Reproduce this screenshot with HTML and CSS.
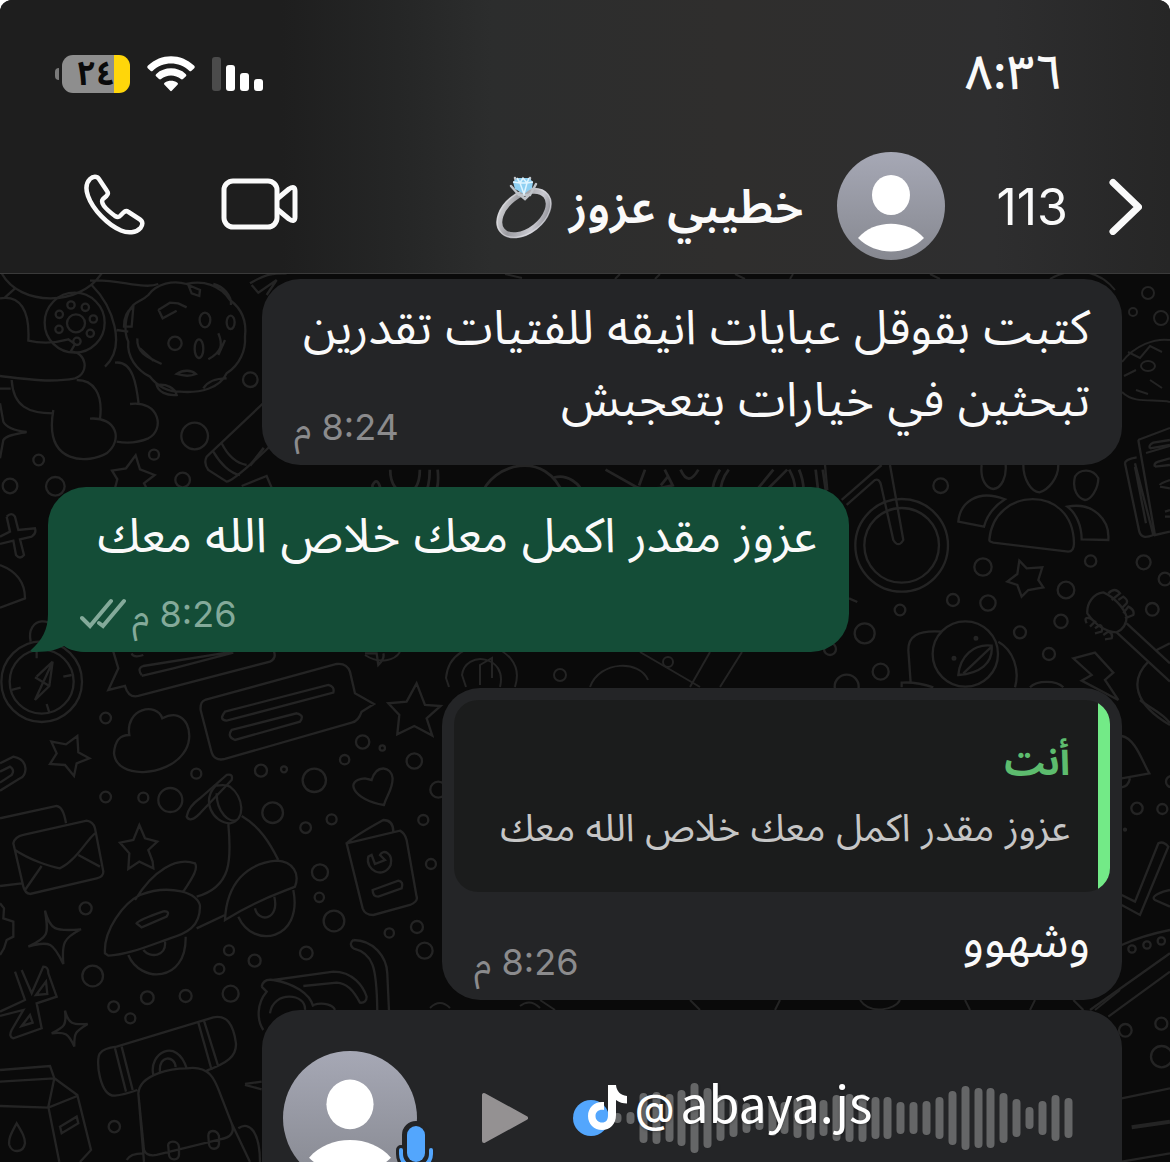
FILE: index.html
```html
<!DOCTYPE html>
<html lang="ar" dir="rtl">
<head>
<meta charset="utf-8">
<meta name="viewport" content="width=device-width, initial-scale=1">
<title>خطيبي عزوز</title>
<link rel="stylesheet" href="styles.css">
</head>
<body>
<div class="screen">
  <header class="header">
    <div class="status">
      <time class="clock">٨:٣٦</time>
      <div class="indicators">
        <svg class="signal" width="52" height="36" viewBox="0 0 52 36" aria-hidden="true">
          <rect x="0" y="1" width="9" height="34" rx="3" fill="#4b4b4b"/>
          <rect x="14" y="9" width="9" height="26" rx="3" fill="#fff"/>
          <rect x="28" y="17" width="9" height="18" rx="3" fill="#fff"/>
          <rect x="42" y="23" width="9" height="12" rx="3" fill="#fff"/>
        </svg>
        <svg width="48" height="36" viewBox="0 0 48 36" fill="#fff" aria-hidden="true">
          <path d="M1 12.5C0 11.500 0 10.500 1 9.500C14-3 34-3 47 9.500C48 10.500 48 11.500 47 12.500L44.500 14.800C43.800 15.500 43 15.500 42.200 14.800C32 5.200 16 5.200 5.800 14.800C5 15.500 4.200 15.500 3.500 14.800Z"/>
          <path d="M9.300 20.600C8.400 19.700 8.400 18.800 9.300 17.900C17.500 10.500 30.500 10.500 38.700 17.900C39.600 18.800 39.600 19.700 38.700 20.600L36 23C35.300 23.600 34.600 23.600 33.900 23C28.200 18.200 19.800 18.200 14.100 23C13.400 23.600 12.700 23.600 12 23Z"/>
          <path d="M17.500 28.800C16.800 28.100 16.900 27.300 17.600 26.800C21.500 24.200 26.500 24.200 30.400 26.800C31.100 27.300 31.200 28.100 30.500 28.800L25 34.600C24.300 35.300 23.700 35.300 23 34.600Z"/>
        </svg>
        <div class="battery"><span class="level">٢٤</span></div>
      </div>
    </div>
    <nav class="nav">
      <button class="icon-btn back" aria-label="رجوع">
        <svg width="34" height="58" viewBox="0 0 34 58" fill="none" stroke="#fafafa" stroke-width="7" stroke-linecap="round" stroke-linejoin="round"><path d="M5 5.500L30.500 30L5 54.500"/></svg>
      </button>
      <span class="unread">113</span>
      <svg class="avatar" viewBox="0 0 108 108" aria-hidden="true">
        <defs><linearGradient id="face" x1="0" y1="0" x2="0" y2="1"><stop offset="0" stop-color="#a6a8b5"/><stop offset="1" stop-color="#868890"/></linearGradient></defs>
        <circle cx="54" cy="54" r="54" fill="url(#face)"/>
        <ellipse cx="54" cy="43" rx="19" ry="20" fill="#fff"/>
        <path d="M21 86C37 67 71 67 87 86C69 104 39 104 21 86Z" fill="#fff"/>
      </svg>
      <h1 class="name">خطيبي عزوز
        <svg class="ring" width="58" height="62" viewBox="0 0 58 62" role="img" aria-label="خاتم">
          <defs><linearGradient id="metal" x1="0" y1="0" x2="1" y2="1"><stop offset="0" stop-color="#e2e2e4"/><stop offset=".35" stop-color="#9b9ba0"/><stop offset=".7" stop-color="#c9c9d0"/><stop offset="1" stop-color="#77777e"/></linearGradient></defs>
          <ellipse cx="29" cy="38" rx="28" ry="18" transform="rotate(-38 29 38)" fill="none" stroke="url(#metal)" stroke-width="6"/>
          <ellipse cx="29" cy="38" rx="30" ry="20" transform="rotate(-38 29 38)" fill="none" stroke="#e5e5ea" stroke-width="1" opacity=".6"/>
          <path d="M16 11L24 20L35 20L41 9M20 3L24 14M35 3L33 14M24 19L30 24L35 19" fill="none" stroke="#bfc3c8" stroke-width="2.500" stroke-linecap="round"/>
          <path d="M18 7L22 3H34L38 7L37 13L29 19L20 14Z" fill="#8fd0f2"/>
          <path d="M22 3L25 8L28 3L32 8L34 3M18 7L25 8L32 8L38 7M25 8L29 19L32 8" fill="none" stroke="#dff4ff" stroke-width="1.500"/>
        </svg>
      </h1>
      <div class="calls">
        <button class="icon-btn" aria-label="مكالمة فيديو">
          <svg width="78" height="52" viewBox="0 0 78 52" fill="none" stroke="#fafafa" stroke-width="5" stroke-linejoin="round"><rect x="3" y="3" width="53" height="46" rx="9"/><path d="M56 21L68 11Q74 7 74 13V39Q74 45 68 41L56 31"/></svg>
        </button>
        <button class="icon-btn" aria-label="مكالمة صوتية">
          <svg width="61" height="61" viewBox="0 0 61 61" fill="none" stroke="#fafafa" stroke-width="4.500" stroke-linejoin="round"><path d="M6 5C9 2 13 2 15 5L23 17C24.500 19 24 20.500 22.500 22L19 25C17 27 18 29 20 32C23 36 27 39 31 42C33.500 43.500 35 43.500 36.500 41.500L39.500 38.500C41 37 42.500 36.500 44.500 38L56 45.500C59 47.500 59 51 56.500 54C52 59 44 59.500 37 56.500C24 51 9 36 4 22C1.500 15 2 9 6 5Z"/></svg>
        </button>
      </div>
    </nav>
  </header>

  <main class="chat">
    <svg class="wallpaper" width="1170" height="888" viewBox="0 274 1170 888" aria-hidden="true">
      <g transform="translate(0 270) scale(.3333)">
        <path d="M5 10C60 110 240 110 305 10M0 85C60 75 90 120 85 212C130 222 170 218 205 208L225 222L212 245C260 245 270 310 225 325C150 340 60 325 0 318M45 55L12 85M35 330C40 410 85 430 160 430M0 356H32M160 420C130 590 270 580 320 550C370 510 350 440 270 446M300 446C310 370 280 330 230 330M275 45C340 110 380 230 315 290M345 278C400 270 410 350 416 402M390 402C480 390 495 480 445 505C410 520 380 520 350 515M270 32C350 25 430 60 475 42M350 180L385 185M0 400L10 455C20 475 50 482 80 486C50 492 20 495 10 510L0 565"/>
        <circle cx="224" cy="158" r="90"/><circle cx="228" cy="160" r="27"/><circle cx="213" cy="105" r="11"/><circle cx="256" cy="112" r="11"/><circle cx="178" cy="133" r="11"/><circle cx="280" cy="147" r="11"/><circle cx="177" cy="178" r="11"/><circle cx="271" cy="190" r="11"/><circle cx="231" cy="214" r="11"/>
        <path d="M400 105C410 95 430 90 445 75C470 40 520 30 560 42C610 30 660 45 690 90C730 120 740 160 735 200C738 240 720 285 680 310C660 355 600 370 540 365C500 365 470 345 450 320C410 300 380 260 385 215C370 185 375 130 400 105ZM565 45L600 60L598 78L575 70ZM640 42C670 50 695 75 693 105M475 120L510 98L535 100L560 112M475 118L488 145L530 122M412 205C410 245 435 260 485 282M420 235L460 272M655 190C670 225 665 245 625 268M675 210L655 255M470 345C500 340 525 355 530 375C500 378 475 365 470 345ZM610 355C625 330 650 325 680 325M530 312C550 298 575 300 588 312C570 320 550 318 530 312ZM372 170C372 140 385 120 400 112L395 170Z"/>
        <ellipse cx="615" cy="150" rx="16" ry="22"/><ellipse cx="525" cy="220" rx="20" ry="20"/><ellipse cx="597" cy="236" rx="13" ry="28"/><ellipse cx="692" cy="157" rx="12" ry="20"/>
        <circle cx="751" cy="329" r="22"/><circle cx="584" cy="498" r="40"/><circle cx="462" cy="554" r="15"/><circle cx="116" cy="570" r="16"/><circle cx="30" cy="648" r="22"/><circle cx="166" cy="649" r="28"/><circle cx="548" cy="630" r="22"/>
        <path d="M800 390L620 560Q610 580 625 600L680 635Q700 635 830 510M640 545C660 580 690 610 720 615M665 520C685 560 710 580 740 585M750 40C800 10 820 10 860 10M755 45L775 68L830 30L800 75M345 655L352 628L336 602L378 595L407 556L420 598L464 615L432 640L440 655M725 648L800 618L818 660M20 740Q35 725 45 740L55 780L105 775Q110 790 95 800L60 808L72 855Q60 870 48 855L40 812L0 822M0 800L30 785L20 740"/>
      </g>
      <g transform="translate(0 560) scale(.3333)">
        <path d="M0 15C40 30 75 60 75 115L0 143"/>
        <circle cx="125" cy="365" r="121"/><circle cx="125" cy="365" r="96"/><path d="M92 245C75 170 170 160 175 240M105 420L158 305L148 378ZM105 352L148 378M110 350L158 305M110 275V295M190 350L215 345M140 432L148 458M35 390L62 383"/>
        <circle cx="317" cy="474" r="16"/><circle cx="317" cy="711" r="16"/><circle cx="430" cy="713" r="15"/><circle cx="511" cy="720" r="36"/><circle cx="589" cy="641" r="15"/><circle cx="783" cy="632" r="18"/><circle cx="852" cy="628" r="9"/><circle cx="943" cy="661" r="35"/><circle cx="818" cy="758" r="31"/><circle cx="917" cy="803" r="16"/><circle cx="995" cy="778" r="15"/><circle cx="1034" cy="599" r="14"/><circle cx="1088" cy="546" r="20"/><circle cx="1147" cy="564" r="8"/><circle cx="1243" cy="603" r="23"/><circle cx="1315" cy="689" r="24"/><circle cx="1270" cy="780" r="15"/>
        <path d="M340 275L355 325L325 390L375 378Q385 415 415 408L810 305Q830 295 822 275M395 280Q400 295 430 285M425 345Q410 325 430 318L700 275M425 348L520 325L700 278M615 420L1010 312Q1040 308 1050 335L1065 400L1122 432L1085 455Q1075 485 1055 488L675 597Q640 605 633 570L602 450Q600 425 615 420ZM675 455L985 375Q1005 380 1000 398L680 482Q655 480 675 455ZM695 510L890 460Q915 465 900 485L705 540Q680 530 695 510ZM388 525C375 445 470 425 487 475C560 435 590 530 550 580C500 650 350 660 342 580C345 540 360 525 388 525Z"/>
        <path d="M1250 370L1275 435L1322 438L1280 475L1297 527L1243 498L1192 523L1198 465L1165 430L1220 425ZM232 528L235 577L268 595L230 610L222 648L195 615L150 612L170 580L154 545L198 553ZM1152 735C1060 720 1030 660 1095 655L1115 660C1130 610 1175 620 1178 655C1178 690 1160 705 1152 735ZM418 795L435 835L472 845L445 870L458 905L460 925L418 905L385 927L388 880L360 848L400 840ZM0 610L40 590C90 600 80 650 60 655L0 692M0 635L30 620Q45 630 35 645L0 668M560 770Q565 740 600 715L680 645Q700 640 695 660L600 760Q570 790 560 770ZM1095 280L1130 280L1135 315Q1155 295 1150 280"/>
        <path d="M650 675C600 720 640 790 690 790C740 780 730 710 690 680C670 670 650 680 650 675ZM650 700C650 760 690 790 710 780M685 792C695 900 695 980 590 1010M725 768C780 800 810 850 835 900M1040 850Q1060 830 1150 780Q1180 780 1180 815M1040 850L1200 812Q1215 820 1220 840L1250 1010Q1255 1025 1230 1035L1120 1065Q1095 1065 1088 1045ZM0 775L170 738Q190 740 198 790M40 850Q45 830 70 825L260 782Q280 785 285 805L310 935Q310 950 290 955L90 1002Q75 1000 70 980ZM45 870C90 900 150 920 180 925C230 900 260 840 285 820M235 885L300 920M75 990L125 918M0 978L65 970"/>
      </g>
      <g transform="translate(0 840) scale(.3333)">
        <path d="M405 180C460 90 530 50 585 70C595 85 580 110 550 155M315 340C310 270 370 190 420 165C510 130 600 160 600 200C600 260 560 280 510 295C440 320 380 345 325 347ZM410 250Q415 240 490 214Q512 212 500 230L425 262ZM385 345C420 430 560 430 557 290M430 330C450 355 500 350 495 305M590 265L675 225M675 240C680 130 740 70 830 62C880 65 900 100 885 140C840 160 790 170 675 240ZM715 230C760 330 910 300 880 150M765 205C775 250 840 240 823 170M135 212C150 270 165 275 243 268C190 295 185 310 190 372C160 310 150 300 85 320C150 290 145 280 135 212ZM195 512C205 550 215 555 263 552C225 575 222 580 223 620C205 580 195 575 155 580C195 560 200 555 195 512ZM45 395L75 480L0 515M65 390L95 460L130 380Q145 380 145 400L170 470L110 490L125 565L40 595Q25 590 35 570L70 510L0 528M108 465L138 425L142 462ZM65 558L90 525L98 548ZM0 190L12 205L10 235L40 245V290L20 300L12 325L0 345M300 640Q310 625 350 620L640 532C680 525 700 550 708 610C710 650 680 670 620 692M300 640C285 660 300 770 345 767Q370 765 412 750M345 625L378 755M365 620L398 750M595 548L635 690M612 542L655 680M460 705C445 640 530 590 560 685M480 695C475 645 525 645 527 682M415 760C420 700 520 685 560 685C630 675 645 720 660 760L695 850Q710 890 660 898L470 945Q440 950 432 930ZM415 760L432 966M695 850L750 966M505 920C500 900 535 900 537 920V945C535 965 508 960 507 945ZM625 888C625 868 650 868 657 888V912C655 932 628 930 627 912ZM715 865C750 840 780 880 780 966M380 960Q390 940 430 940M0 690L150 678L163 715L232 765L273 930L240 966M163 715L145 800L178 966M0 725L163 715M0 798L145 803L232 768M180 860L230 830L235 850L185 880ZM50 850C30 885 25 900 28 915C35 940 70 940 75 910C75 890 65 875 50 850ZM1060 300C1120 300 1160 350 1162 400L1167 510M1060 325C1120 340 1130 380 1132 510M1060 300Q1045 312 1060 325M785 440Q790 415 820 420L1000 395C1060 395 1090 440 1100 470Q1100 490 1080 488C1060 450 1040 430 1010 428L910 438M820 420C880 430 930 460 940 500M785 440L800 455C770 490 770 540 790 570M810 520C820 450 920 460 915 510M940 495C970 485 1000 495 1005 510M735 732L785 725M735 735L785 748"/>
        <circle cx="257" cy="205" r="18"/><circle cx="278" cy="408" r="31"/><circle cx="341" cy="500" r="16"/><circle cx="391" cy="535" r="15"/><circle cx="442" cy="473" r="19"/><circle cx="557" cy="468" r="18"/><circle cx="658" cy="387" r="15"/><circle cx="687" cy="331" r="15"/><circle cx="764" cy="362" r="18"/><circle cx="692" cy="461" r="24"/><circle cx="919" cy="339" r="19"/><circle cx="960" cy="97" r="24"/><circle cx="958" cy="172" r="14"/><circle cx="1002" cy="243" r="31"/><circle cx="1168" cy="279" r="14"/><circle cx="1251" cy="261" r="18"/><circle cx="1274" cy="332" r="24"/><circle cx="1293" cy="72" r="15"/><circle cx="343" cy="860" r="17"/>
        <path d="M1105 50C1095 90 1150 120 1172 75C1180 40 1150 25 1140 45L1155 60L1125 72L1115 45ZM1118 150L1195 122Q1212 125 1205 145L1135 170Q1118 170 1118 150Z"/>
      </g>
      <g transform="translate(820 440) scale(.3333)">
        <circle cx="245" cy="316" r="139"/><circle cx="245" cy="316" r="112"/><path d="M15 75L22 150M65 180L185 75M80 195L165 120Q178 115 183 135L220 300Q235 325 250 300L210 75"/>
        <circle cx="362" cy="137" r="22"/><circle cx="489" cy="381" r="26"/><circle cx="399" cy="480" r="18"/><circle cx="504" cy="489" r="23"/><circle cx="240" cy="510" r="16"/><circle cx="134" cy="580" r="30"/><circle cx="182" cy="695" r="24"/><circle cx="738" cy="450" r="25"/><circle cx="723" cy="544" r="20"/><circle cx="600" cy="577" r="18"/><circle cx="687" cy="642" r="18"/><circle cx="812" cy="363" r="17"/><circle cx="971" cy="367" r="21"/><circle cx="1035" cy="417" r="19"/><circle cx="997" cy="508" r="19"/><circle cx="30" cy="627" r="18"/><circle cx="80" cy="740" r="36"/><circle cx="436" cy="642" r="98"/><circle cx="468" cy="595" r="4"/><circle cx="402" cy="655" r="4"/>
        <path d="M485 75C480 120 500 145 520 147C545 145 560 110 557 75M610 75C610 120 635 155 658 157C685 150 715 115 715 75M765 110C780 85 820 85 835 115C835 150 810 180 795 180C775 175 755 150 765 110ZM415 245C420 190 470 145 555 178C520 200 500 230 492 260Q440 250 415 245ZM508 300C520 140 760 130 762 310Q762 335 745 335L520 308Q508 305 508 300ZM742 200C820 185 870 240 865 300L785 298C785 260 770 220 742 200ZM598 362L620 385L667 382L655 420L670 442L625 450L605 470L592 435L562 425L592 402ZM760 655L825 638L880 698L855 720L895 780L785 722L815 705ZM915 70Q915 58 950 52M915 70L958 275Q965 300 1000 285L945 70M945 80L978 250M955 0L1005 285L1050 275M990 25Q985 15 1000 8L1050 0M990 25L1050 15M1005 80Q1000 70 1015 65L1050 55M1005 80L1050 75M1020 135Q1020 130 1050 120M1020 140L1050 145M1035 215L1050 210M1035 230H1050"/>
        <path d="M850 457C820 460 800 490 802 520C830 560 860 575 890 577C915 565 920 545 920 530C910 500 880 470 850 457ZM865 460Q885 440 900 460L875 480M895 480L910 470Q925 480 920 490L905 505M910 520L925 500Q945 510 940 525L915 535M800 550Q790 530 810 535L825 545L810 560M825 565L840 555Q850 560 845 575L825 580M850 585L865 575Q880 580 875 595L855 598M890 577L1050 725M920 550L1050 670M1010 630L1050 610M985 665C930 720 940 790 1050 855M535 605C580 630 600 690 585 742M365 575C290 570 265 590 265 630L272 728M245 742V728Q290 725 340 742M415 705C420 650 460 610 515 617C520 670 480 700 415 705ZM430 700L515 620M630 742C650 720 710 720 730 742M87 475L112 486"/>
      </g>
      <g transform="translate(1050 700) scale(.3333)">
        <path d="M270 0C300 25 340 40 360 70M215 108C255 115 275 180 298 220L215 235M240 235Q235 260 215 262M215 585L255 605L325 430Q340 422 355 440L270 645L215 615M360 570L340 575Q300 590 315 600L360 620M215 735C270 710 310 700 360 690M70 900L100 930M120 930L360 760M175 950L360 815M215 1195L360 1165M215 1385L360 1360"/><path d="M245 1282L360 1265" stroke-width="12"/>
        <circle cx="261" cy="325" r="17"/><circle cx="337" cy="327" r="15"/><circle cx="225" cy="389" r="3"/><circle cx="365" cy="245" r="17"/><circle cx="246" cy="747" r="11"/><circle cx="291" cy="735" r="11"/><circle cx="334" cy="723" r="11"/><circle cx="226" cy="991" r="19"/><circle cx="334" cy="971" r="18"/><circle cx="335" cy="1070" r="32"/>
      </g>
      <g transform="translate(250 440) scale(.395)">
        <path d="M355 75C355 150 430 160 430 75M455 75Q455 120 440 142M475 75Q480 120 465 142M585 142C610 60 750 20 795 142M770 95C800 85 840 110 842 140M310 142V115Q320 95 328 115L335 142M165 142Q180 110 198 142M900 75L980 120Q1010 130 1070 115L1050 75M985 115L1000 75M1040 115L1060 90M1090 75Q1110 120 1135 75M1170 142C1170 110 1180 90 1190 75M1190 142C1190 110 1200 90 1212 75M1325 75L1280 130Q1290 145 1300 135L1360 75M1365 75Q1385 110 1378 142M1390 75Q1405 110 1400 142M1432 75L1440 142M1450 75L1460 142M0 65L35 20"/>
      </g>
      <g class="fine">
        <path d="M505 274L522 278M620 274L615 279M660 274L655 279M735 274L745 279M793 274L790 279M930 274L940 279M1050 279C1065 270 1095 265 1115 290M1122 362C1135 345 1155 338 1170 340M1122 392C1135 405 1155 398 1170 402M1128 352L1140 358L1150 346L1162 352M1124 376L1136 370M1150 380L1162 388M1136 390L1148 394"/>
        <circle cx="1148" cy="293" r="6"/><circle cx="1133" cy="312" r="4"/><circle cx="1161" cy="318" r="7"/><ellipse cx="1148" cy="366" rx="7" ry="5"/>
        <path d="M1138 440L1170 428M1146 453L1170 446M515 687C530 640 450 630 446 678L449 687M500 687C508 655 465 650 462 675L466 687M480 685V665L492 658V678M590 687C600 660 640 660 648 680M690 687L710 652M720 687L742 652M640 652L700 687M365 655C380 665 395 660 400 652M520 1006Q530 998 540 1008M430 1008Q440 998 450 1008M540 1000L555 1010M700 1010L690 1000M780 1000L775 1010M860 1000C870 1015 895 1010 900 1000M965 1000L970 1010M1035 1000L1030 1010M1095 1010L1120 990"/>
        <circle cx="560" cy="675" r="6"/><circle cx="668" cy="662" r="5"/>
      </g>
    </svg>

    <article class="bubble in wide first">
      <p class="text">كتبت بقوقل عبايات انيقه للفتيات تقدرين<br>تبحثين في خيارات بتعجبش</p>
      <time class="time"><bdi>8:24</bdi> م</time>
    </article>

    <article class="bubble out">
      <svg class="tail" width="60" height="62" viewBox="0 0 60 62" fill="#144d37" aria-hidden="true"><path d="M18 0V24C18 40 12 50 1 60C-1 62 3 62 6 62C20 62 28 59 34 56C40 60 46 62 60 62V0Z"/></svg>
      <p class="text">عزوز مقدر اكمل معك خلاص الله معك</p>
      <div class="meta">
        <time class="time"><bdi>8:26</bdi> م</time>
        <svg width="46" height="32" viewBox="0 0 46 32" fill="none" stroke="#84aa9a" stroke-width="4" stroke-linecap="round" role="img" aria-label="تم التسليم"><path d="M2 20L10 28L31 3M19 25L23 28L44 3"/></svg>
      </div>
    </article>

    <article class="bubble in reply">
      <blockquote class="quote">
        <strong class="author">أنت</strong>
        <p class="quoted">عزوز مقدر اكمل معك خلاص الله معك</p>
      </blockquote>
      <div class="row">
        <p class="text">وشهوو</p>
        <time class="time"><bdi>8:26</bdi> م</time>
      </div>
    </article>

    <article class="bubble in wide voice">
      <div class="sender">
        <svg class="photo" viewBox="0 0 108 108" aria-hidden="true">
          <circle cx="54" cy="54" r="54" fill="url(#face)"/>
          <ellipse cx="54" cy="43" rx="19" ry="20" fill="#fff"/>
          <path d="M21 86C37 67 71 67 87 86C69 104 39 104 21 86Z" fill="#fff"/>
        </svg>
        <svg class="mic" width="40" height="60" viewBox="0 0 40 60" aria-hidden="true">
          <g fill="none" stroke="#232426" stroke-width="10" stroke-linecap="round"><path d="M5 29V33C5 51 35 51 35 33V29M20 46V54"/><rect x="11" y="5" width="18" height="36" rx="9"/></g>
          <path d="M5 29V33C5 51 35 51 35 33V29M20 46V54" fill="none" stroke="#53a6fd" stroke-width="4" stroke-linecap="round"/>
          <rect x="11" y="5" width="18" height="36" rx="9" fill="#53a6fd"/>
        </svg>
      </div>
      <button class="icon-btn" aria-label="تشغيل">
        <svg width="46" height="52" viewBox="0 0 46 52" fill="#949192" stroke="#949192" stroke-width="4" stroke-linejoin="round"><path d="M2 3V49L44 26Z"/></svg>
      </button>
      <div class="track">
        <svg class="wave" viewBox="0 0 500 70" stroke="#656667" stroke-width="8" stroke-linecap="round" aria-hidden="true">
          <path d="M44 34v2M57 33v4M70 14v42M83 13v44M96 15v40M108 11v48M121 4v62M134 9v52M147 16v38M160 20v30M173 24v22M186 27v16M199 21v28M211 23v24M224 19v32M237 17v36M250 21v28M263 16v38M276 15v40M289 15v40M302 18v34M314 18v34M327 23v24M340 23v24M353 22v26M366 18v34M379 12v46M392 7v56M405 9v52M417 9v52M430 14v42M443 20v30M456 28v14M469 22v26M482 16v38M495 19v32"/>
        </svg>
        <input class="seek" type="range" min="0" max="100" value="0" aria-label="موضع التشغيل">
      </div>
    </article>
  </main>

  <div class="watermark">
    <svg width="39" height="46" viewBox="0 0 39 46" fill="#fff" aria-hidden="true"><path d="M20 0H28C28.500 6 32 10 39 11V18.500C35 18.500 31 17.500 28 15V30C28 39 22 45 14 45C6 45 0 39 0 31C0 22 7 16 16 17V25C11 24 7.500 27 7.500 31C7.500 35 10.500 37.500 14 37.500C18 37.500 20 35 20 30Z"/></svg>
    <span><span class="at">@</span>abaya.js</span>
  </div>
</div>
</body>
</html>
```
FILE: styles.css
```css
* { box-sizing: border-box; }

html { background: #fff; }

body {
  margin: 0;
  font-family: Inter, "Noto Sans Arabic", "Noto Sans", "DejaVu Sans", sans-serif;
  color: #fafafa;
}

p, h1, blockquote { margin: 0; }

svg { display: block; flex: none; }

.screen {
  position: relative;
  display: flex;
  flex-direction: column;
  height: 100vh;
  overflow: hidden;
  border-radius: 12px 12px 0 0;
  background: #0a0a0a;
}

.header {
  flex: none;
  background: linear-gradient(90deg, #1e1e1e 0, #1e1e1e 24%, #252626 34%, #2c2d2d 42%, #2f2e2d 62%, #2e2e2f 85%, #262626 100%);
  border-bottom: 1px solid #3a3a3a;
  padding-bottom: 9px;
}

.status {
  display: flex;
  justify-content: space-between;
  align-items: center;
  height: 148px;
  padding: 0 108px 0 54px;
}

.clock { font-size: 48px; line-height: 56px; font-weight: 500; padding-bottom: 4px; }

.indicators { display: flex; align-items: center; gap: 17px; }

.battery {
  position: relative;
  width: 68px;
  height: 38px;
  margin-left: 8px;
  border-radius: 11px;
  background: linear-gradient(270deg, #ffd60a 0, #ffd60a 16px, #8e8e8e 16px);
  color: #0a0a0a;
  text-align: center;
}

.battery::after {
  content: "";
  position: absolute;
  left: -7px;
  top: 13px;
  width: 4px;
  height: 12px;
  border-radius: 4px 0 0 4px;
  background: #7a7a7a;
}

.level { display: block; font-size: 34px; line-height: 36px; font-weight: 700; }

.nav {
  display: flex;
  align-items: center;
  height: 116px;
  padding: 0 28px 0 84px;
}

.icon-btn {
  flex: none;
  padding: 0;
  border: 0;
  background: none;
}

.unread { margin-right: 40px; padding-top: 2px; font-size: 50px; line-height: 60px; }

.avatar { width: 108px; height: 108px; margin-right: 51px; }

.name {
  display: flex;
  align-items: center;
  gap: 16px;
  margin-right: 34px;
  font-size: 47px;
  line-height: 60px;
  font-weight: 600;
  white-space: nowrap;
}

.ring { overflow: visible; }

.calls {
  display: flex;
  align-items: center;
  gap: 76px;
  margin-right: auto;
  padding-bottom: 4px;
}

.chat {
  position: relative;
  flex: 1;
  display: flex;
  flex-direction: column;
  align-items: flex-start;
  min-height: 0;
  padding: 5px 48px 0;
  overflow: hidden;
}

.wallpaper {
  position: absolute;
  left: 0;
  top: 0;
  fill: none;
  stroke: #242424;
  stroke-width: 7px;
}

.fine { stroke-width: 2px; }

.bubble {
  position: relative;
  flex: none;
  max-width: 100%;
  border-radius: 38px;
}

.in { background: #242527; }

.wide { width: 860px; }

.text { font-size: 48px; line-height: 72px; white-space: nowrap; }

.time { font-size: 36px; line-height: 44px; color: #8b8b8d; white-space: nowrap; }

.first { display: grid; padding: 12px 32px 16px; }

.first .text, .first .time { grid-area: 1 / 1; }

.first .text { margin-bottom: 14px; }

.first .time { align-self: end; justify-self: end; }

.out {
  align-self: flex-end;
  width: 801px;
  margin-top: 22px;
  padding: 12px 32px 16px;
  background: #144d37;
}

.meta {
  position: relative;
  display: flex;
  align-items: center;
  justify-content: flex-end;
  gap: 6px;
  margin-top: 21px;
}

.out .time { color: #84aa9a; }

.tail { position: absolute; left: -18px; bottom: 0; }

.reply { width: 680px; margin-top: 36px; padding: 12px 12px 16px; }

.quote {
  padding: 28px 40px 32px 28px;
  border-radius: 24px;
  background: linear-gradient(270deg, #73ea87 0, #73ea87 12px, #1b1c1c 12px);
}

.author { display: block; font-size: 38px; line-height: 66px; font-weight: 700; color: #5dbc6e; }

.quoted { font-size: 38px; line-height: 66px; color: #c6c6c6; white-space: nowrap; }

.row {
  display: flex;
  justify-content: space-between;
  align-items: flex-end;
  padding: 12px 20px 0;
}

.row .text { margin-bottom: 8px; }

.voice {
  display: flex;
  align-items: center;
  direction: ltr;
  height: 216px;
  margin-top: 10px;
  padding: 0 48px 0 21px;
}

.sender { position: relative; }

.photo { width: 134px; height: 134px; }

.mic { position: absolute; left: 113px; top: 70px; }

.voice .icon-btn { margin: 0 45px 0 65px; }

.track { position: relative; flex: 1; }

.wave { width: 100%; height: 70px; }

.seek {
  position: absolute;
  left: 0;
  top: 17px;
  width: 100%;
  height: 36px;
  margin: 0;
  appearance: none;
  background: none;
}

.seek::-webkit-slider-thumb {
  appearance: none;
  width: 36px;
  height: 36px;
  border: 0;
  border-radius: 50%;
  background: #53a6fd;
}

.watermark {
  position: absolute;
  left: 588px;
  top: 1065px;
  display: flex;
  align-items: flex-start;
  gap: 8px;
  direction: ltr;
  font-family: "Noto Sans CJK SC", sans-serif;
  font-size: 50px;
  line-height: 72px;
  color: #fff;
  text-shadow: 0 1px 3px rgba(0, 0, 0, .3);
}

.watermark svg { margin-top: 20px; }

.at { margin-right: 6px; font-family: Inter, sans-serif; font-size: 40px; font-weight: 500; }
```
